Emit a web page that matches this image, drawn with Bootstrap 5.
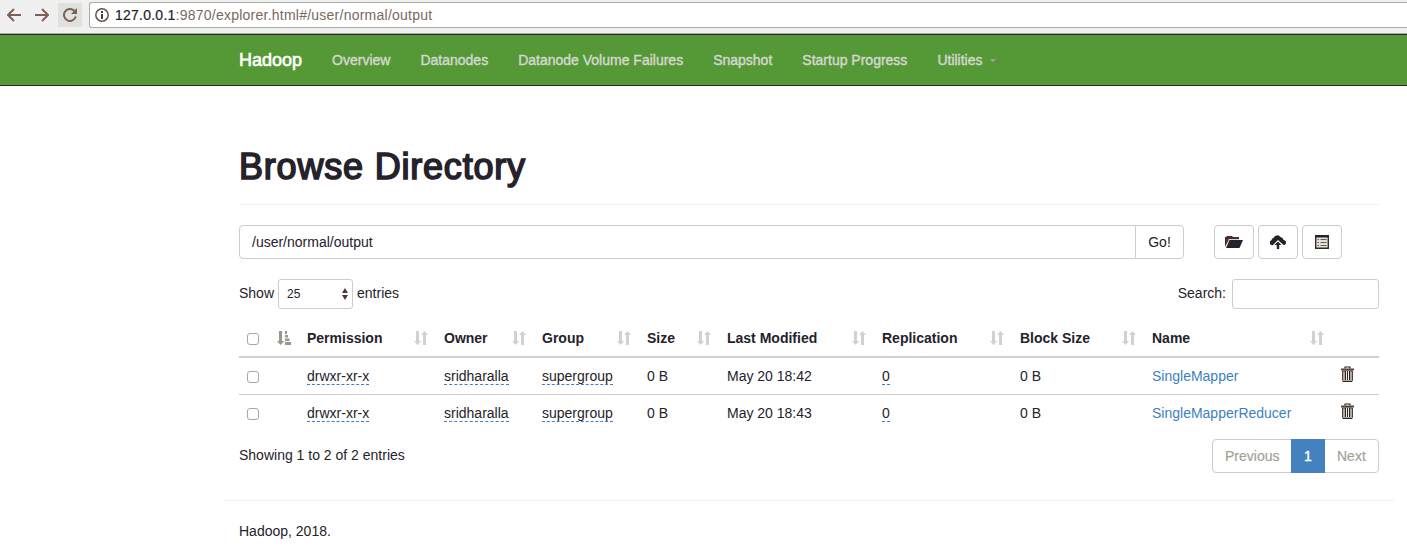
<!DOCTYPE html>
<html lang="en">
<head>
<meta charset="utf-8">
<title>Browsing HDFS</title>
<link href="https://cdn.jsdelivr.net/npm/bootstrap@5.3.0/dist/css/bootstrap.min.css" rel="stylesheet">
<style>
body{font-family:"Liberation Sans",Arial,sans-serif;font-size:14px;line-height:20px;color:#25222b;background:#fff;overflow:hidden}
svg{display:block;flex:none}
.chrome{height:34px;background:#f0f0f0;border-bottom:1px solid #a8a8a8}
.tools{height:30px;padding-left:7px}
.reload{width:24px;height:24px;background:#dfe2dc;margin-left:9px}
.omni{height:26px;margin:2px 0 0 7px;padding-left:5px;background:#fff;border:1px solid #aaada0;border-right:0;border-radius:3px 0 0 3px;color:#7a685e;letter-spacing:.24px}
.omni b{font-weight:400;color:#25222b;-webkit-text-stroke:.2px}
.topnav{height:52px;background:#549936;border-top:1px solid #2a262d;border-bottom:1px solid #2a262d}
.wrap{width:1170px;margin-left:224px;padding:0 15px}
.topnav .nav-link,.topnav .navbar-brand{padding:0;margin:0;line-height:20px;color:#d5d7d0;-webkit-text-stroke:.4px}
.topnav .navbar-brand{font-size:18px;color:#fff;-webkit-text-stroke:.6px}
.topnav .menu-gap{gap:30px}
.title{margin:61px 0 0;font-size:36px;line-height:40px;font-weight:400;letter-spacing:.8px;-webkit-text-stroke:1.6px #25222b;height:58px;border-bottom:1px solid #eee}
.box{height:34px;border:1px solid #ccc;border-radius:4px;background:#fff;color:#25222b;font-size:14px;line-height:20px;padding:6px 12px}
.box.small-box{height:30px;border-radius:3px;font-size:12px;padding:0 4px 0 8px}
.box.icon-btn{width:40px;padding:0 0 1px;display:flex;align-items:center;justify-content:center}
.files{width:1140px;table-layout:fixed;border-collapse:separate;border-spacing:0;margin:11px 0 0;color:inherit}
.files>thead>tr>th,.files>tbody>tr>td{height:36px;padding:8px;border:0;line-height:20px;white-space:nowrap;background:none;box-shadow:none;color:#25222b;vertical-align:top}
.files>thead>tr>th{height:38px;border-bottom:2px solid #d0d1cc}
.files>tbody>tr+tr>td{border-top:1px solid #ccc}
.files span.ed{display:inline-block;line-height:16px;border-bottom:1px dashed #3e80c0}
.files a{color:#3e7fbf;text-decoration:none}
.chk{width:12px;height:12px;border:1px solid #a9a89c;border-radius:3px;background:#fff;margin-top:5px;display:block}
.pagination .page-link{height:34px;padding:6px 12px;font-size:14px;line-height:20px;color:#a3a395;border-color:#ccc;background:#fff;-webkit-text-stroke:.2px}
.pagination .page-item:first-child .page-link{border-radius:4px 0 0 4px}
.pagination .page-item:last-child .page-link{border-radius:0 4px 4px 0}
.pagination .page-item.active .page-link{background:#4381bf;border-color:#4381bf;color:#fff;-webkit-text-stroke:.4px}
.foot{width:1170px;margin:27px 0 0 224px;border-top:1px solid #eee;padding:20px 15px}
</style>
</head>
<body>
<svg width="0" height="0" class="position-absolute"><defs>
<symbol id="sort" viewBox="0 0 14 14"><path d="M2 0h3v10H7.200L3.500 14 0 10h2zM9 14h3V4H14L10.500 0 7 4h2z" fill="#d0d3cd"/></symbol>
<symbol id="trash" viewBox="0 0 13 16"><path d="M4 2.500V1h5v1.500" fill="none" stroke="#2b2226" stroke-width="1.200"/><path d="M0 2.500h13v2H0z" fill="#54463f"/><path d="M1.500 5h10v9.500a1 1 0 0 1-1 1h-8a1 1 0 0 1-1-1z" fill="#b1aa9a" stroke="#54403a"/><path d="M4.500 5v9M8.500 5v9" stroke="#2b2226"/><path d="M5.500 5v9M7.500 5v9" stroke="#eee"/><path d="M6.500 5v9M2 15.500h9" stroke="#2b2226"/></symbol>
</defs></svg>
<div class="chrome d-flex">
  <div class="tools d-flex align-items-center">
    <svg width="14" height="14" viewBox="0 0 14 14" fill="none" stroke="#7c6053" stroke-width="2"><path d="M14 7H1M7 1 1 7l6 6"/></svg>
    <svg width="14" height="14" viewBox="0 0 14 14" style="margin-left:14px" fill="none" stroke="#7c6053" stroke-width="2"><path d="M0 7h13M7 1l6 6-6 6"/></svg>
    <span class="reload d-flex align-items-center justify-content-center"><svg width="14" height="14" viewBox="0 0 14 14"><path d="M11.500 3A6 6 0 1 0 12.800 8.500" fill="none" stroke="#7c6053" stroke-width="2"/><path d="M14 0v6H8z" fill="#7c6053"/></svg></span>
  </div>
  <div class="omni d-flex align-items-center flex-grow-1">
    <svg width="14" height="14" viewBox="0 0 14 14"><circle cx="7" cy="7" r="6.200" fill="none" stroke="#69534b" stroke-width="1.500"/><path d="M6 3h2v2H6zM6 6h2v5H6z" fill="#4b3833"/></svg>
    <span style="margin-left:6px"><b>127.0.0.1</b>:9870/explorer.html#/user/normal/output</span>
  </div>
</div>
<nav class="topnav"><div class="wrap menu-gap d-flex align-items-center h-100">
  <a class="navbar-brand" href="#">Hadoop</a>
  <a class="nav-link" href="#">Overview</a>
  <a class="nav-link" href="#">Datanodes</a>
  <a class="nav-link" href="#">Datanode Volume Failures</a>
  <a class="nav-link" href="#">Snapshot</a>
  <a class="nav-link" href="#">Startup Progress</a>
  <a class="nav-link d-flex align-items-center" href="#">Utilities <svg width="6" height="3" viewBox="0 0 6 3" style="margin-left:7px"><path d="M0 0h6L3 3z" fill="#a6a394"/></svg></a>
</div></nav>
<main class="wrap">
  <h1 class="title">Browse Directory</h1>
  <div class="d-flex" style="margin-top:20px">
    <div class="input-group flex-nowrap" style="width:945px">
      <div class="box flex-grow-1 rounded-end-0">/user/normal/output</div>
      <button class="box rounded-start-0" style="width:49px;padding:0;margin-left:-1px">Go!</button>
    </div>
    <div class="d-flex gap-1" style="margin-left:30px">
      <button class="box icon-btn"><svg width="18" height="14" viewBox="0 0 18 14"><path d="M0 12V2h1l1-1h5l1 1h6v2.500H4z" fill="#47302c"/><path d="M4.500 5H18l-3.500 8H1z" fill="#25222b"/><path d="M3.500 4.500h12" stroke="#eee" stroke-width=".7"/></svg></button>
      <button class="box icon-btn"><svg width="16" height="14" viewBox="0 0 16 14"><path d="M3 10A2.500 2.500 0 0 1 1.500 5.200 2.300 2.300 0 0 1 3.500 3 4 4 0 0 1 10.500 2 3.500 3.500 0 0 1 13.500 5 2.500 2.500 0 0 1 13.500 10L8 5z" fill="#25222b"/><path d="M8 6.500 11.500 10H9.200v4H6.800v-4H4.500z" fill="#25222b"/></svg></button>
      <button class="box icon-btn"><svg width="14" height="14" viewBox="0 0 14 14"><path d="M.7 1h12.600v12.300H.7z" fill="#e4e1d5" stroke="#35272a" stroke-width="1.400"/><path d="M0 0h14v2.500H0z" fill="#25222b"/><path d="M2.500 4.500H4M2.500 7.500H4M2.500 10.500H4M5.500 4.500h6M5.500 7.500h6M5.500 10.500h6" stroke="#675b53"/></svg></button>
    </div>
  </div>
  <div class="d-flex" style="margin-top:20px;height:30px;line-height:28px">
    <span>Show</span>
    <div class="box small-box d-flex align-items-center justify-content-between" style="width:75px;margin:0 4px"><span>25</span><svg width="6" height="12" viewBox="0 0 6 12"><path d="M0 5h6L3 0zM0 7h6l-3 5z" fill="#4b3a38"/></svg></div>
    <span>entries</span>
    <span class="ms-auto">Search:</span>
    <div class="box small-box" style="width:147px;margin-left:6px"></div>
  </div>
  <table class="table files">
    <colgroup><col style="width:29px"><col style="width:31px"><col style="width:137px"><col style="width:98px"><col style="width:105px"><col style="width:80px"><col style="width:155px"><col style="width:138px"><col style="width:132px"><col style="width:188px"><col style="width:47px"></colgroup>
    <thead><tr>
      <th><i class="chk"></i></th>
      <th><svg class="ms-auto" width="14" height="14" viewBox="0 0 14 14" style="margin-top:3px"><path d="M2 0h3v10h2.500L3.500 14 0 10h2z" fill="#9a978c"/><path d="M8 0h2v3H8zM8 4h3v2.500H8zM8 7.500h4.500V10H8zM8 11h6v3H8z" fill="#9a978c"/></svg></th>
      <th><div class="d-flex align-items-center justify-content-between">Permission<svg width="14" height="14"><use href="#sort"/></svg></div></th>
      <th><div class="d-flex align-items-center justify-content-between">Owner<svg width="14" height="14"><use href="#sort"/></svg></div></th>
      <th><div class="d-flex align-items-center justify-content-between">Group<svg width="14" height="14"><use href="#sort"/></svg></div></th>
      <th><div class="d-flex align-items-center justify-content-between">Size<svg width="14" height="14"><use href="#sort"/></svg></div></th>
      <th><div class="d-flex align-items-center justify-content-between">Last Modified<svg width="14" height="14"><use href="#sort"/></svg></div></th>
      <th><div class="d-flex align-items-center justify-content-between">Replication<svg width="14" height="14"><use href="#sort"/></svg></div></th>
      <th><div class="d-flex align-items-center justify-content-between">Block Size<svg width="14" height="14"><use href="#sort"/></svg></div></th>
      <th><div class="d-flex align-items-center justify-content-between">Name<svg width="14" height="14"><use href="#sort"/></svg></div></th>
      <th></th>
    </tr></thead>
    <tbody>
      <tr><td><i class="chk"></i></td><td></td><td><span class="ed">drwxr-xr-x</span></td><td><span class="ed">sridharalla</span></td><td><span class="ed">supergroup</span></td><td>0 B</td><td>May 20 18:42</td><td><span class="ed">0</span></td><td>0 B</td><td><a href="#">SingleMapper</a></td><td><svg width="13" height="16" style="margin-left:1px"><use href="#trash"/></svg></td></tr>
      <tr><td><i class="chk"></i></td><td></td><td><span class="ed">drwxr-xr-x</span></td><td><span class="ed">sridharalla</span></td><td><span class="ed">supergroup</span></td><td>0 B</td><td>May 20 18:43</td><td><span class="ed">0</span></td><td>0 B</td><td><a href="#">SingleMapperReducer</a></td><td><svg width="13" height="16" style="margin-left:1px"><use href="#trash"/></svg></td></tr>
    </tbody>
  </table>
  <div class="d-flex justify-content-between" style="margin-top:8px">
    <div style="padding-top:6px">Showing 1 to 2 of 2 entries</div>
    <ul class="pagination m-0">
      <li class="page-item"><span class="page-link" style="width:80px">Previous</span></li>
      <li class="page-item active"><span class="page-link text-center" style="width:34px">1</span></li>
      <li class="page-item"><span class="page-link" style="width:55px">Next</span></li>
    </ul>
  </div>
</main>
<footer class="foot">Hadoop, 2018.</footer>
<script src="https://cdn.jsdelivr.net/npm/bootstrap@5.3.0/dist/js/bootstrap.bundle.min.js"></script>
</body>
</html>
